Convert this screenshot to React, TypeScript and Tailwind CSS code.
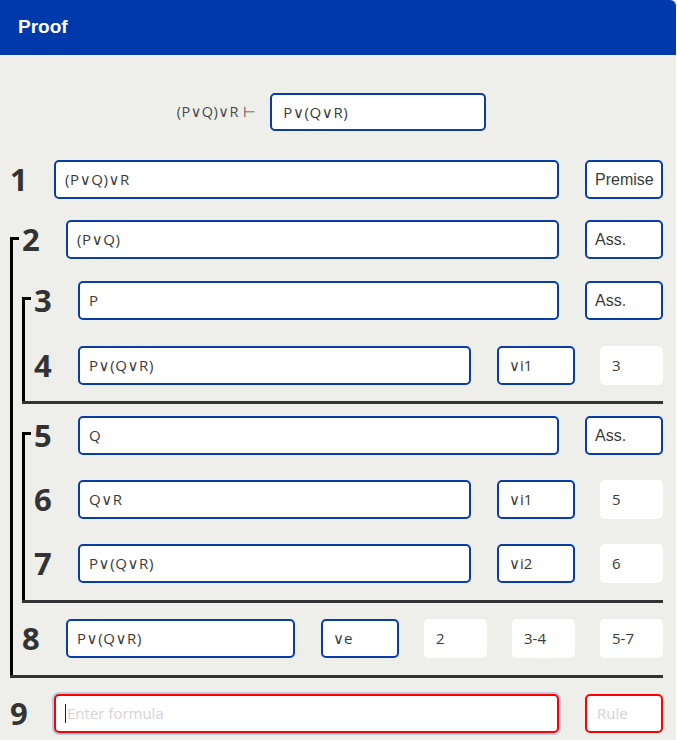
import React from "react";

const FF = { fontFamily: '"Open Sans", "DejaVu Sans", sans-serif' };
const AR = { fontFamily: '"Liberation Sans", Arial, sans-serif' };

type RowProps = {
  n: number;
  formula: string;
  rule: string;
  ruleArial?: boolean;
  refs?: string[];
};

function Row({ n, formula, rule, ruleArial, refs = [] }: RowProps) {
  return (
    <div className="flex items-center h-[39px]">
      <div
        className="w-[44px] shrink-0 text-[31px] font-bold text-[#333] leading-none"
        style={FF}
      >
        {n}
      </div>
      <div
        className="flex-1 min-w-0 h-[39px] border-2 border-[#0a3ca8] rounded-[5px] bg-white pl-[9px] flex items-center text-[15px] text-[#3a3a3a] tracking-[0.6px]"
        style={FF}
      >
        {formula}
      </div>
      <div
        className={`ml-[26px] w-[78px] shrink-0 h-[39px] border-2 border-[#0a3ca8] rounded-[5px] bg-white flex items-center text-[#3a3a3a] ${ruleArial ? "text-[16px] pl-[8px]" : "text-[15px] pl-[10px]"}`}
        style={ruleArial ? AR : FF}
      >
        {rule}
      </div>
      {refs.map((r, i) => (
        <div
          key={i}
          className="ml-[25px] w-[63px] shrink-0 h-[39px] rounded-[5px] bg-white pl-[12px] flex items-center text-[15px] text-[#3a3a3a]"
          style={FF}
        >
          {r}
        </div>
      ))}
    </div>
  );
}

function Sub({
  children,
  className,
  tick,
  pb,
}: {
  children: React.ReactNode;
  className: string;
  tick: string;
  pb: string;
}) {
  return (
    <div className={`relative pl-[12px] border-b-[3px] border-[#333] ${className} ${pb}`}>
      <div className={`absolute left-0 bottom-0 w-[3px] bg-black ${tick}`} />
      <div className={`absolute left-0 w-[9px] h-[3px] bg-black ${tick}`} />
      {children}
    </div>
  );
}

export default function App() {
  return (
    <div className="w-[676px] min-h-[740px] bg-[#eeeeea]">
      <div
        className="h-[55px] bg-[#0039aa] rounded-tr-[6px] flex items-center pl-[18px] text-white text-[19px] font-bold"
        style={AR}
      >
        Proof
      </div>
      <div className="pl-[10px] pr-[13px]">
        <div className="flex items-center justify-center pr-[10px] mt-[38px]">
          <span className="text-[14.5px] text-[#4a4a4a] mr-[14px] tracking-[0.5px]" style={FF}>
            (P∨Q)∨R ⊢
          </span>
          <div
            className="w-[216px] h-[38px] border-2 border-[#0a3ca8] rounded-[5px] bg-white pl-[11px] flex items-center text-[15px] text-[#3a3a3a] tracking-[0.6px]"
            style={FF}
          >
            P∨(Q∨R)
          </div>
        </div>
        <div className="mt-[29px]">
          <Row n={1} formula="(P∨Q)∨R" rule="Premise" ruleArial />
        </div>
        <Sub className="mt-[21px]" tick="top-[17px]" pb="pb-[17px]">
          <Row n={2} formula="(P∨Q)" rule="Ass." ruleArial />
          <Sub className="mt-[22px]" tick="top-[16px]" pb="pb-[16px]">
            <Row n={3} formula="P" rule="Ass." ruleArial />
            <div className="mt-[26px]">
              <Row n={4} formula="P∨(Q∨R)" rule="∨i1" refs={["3"]} />
            </div>
          </Sub>
          <Sub className="mt-[12px]" tick="top-[16px]" pb="pb-[17px]">
            <Row n={5} formula="Q" rule="Ass." ruleArial />
            <div className="mt-[25px]">
              <Row n={6} formula="Q∨R" rule="∨i1" refs={["5"]} />
            </div>
            <div className="mt-[25px]">
              <Row n={7} formula="P∨(Q∨R)" rule="∨i2" refs={["6"]} />
            </div>
          </Sub>
          <div className="mt-[16px]">
            <Row n={8} formula="P∨(Q∨R)" rule="∨e" refs={["2", "3-4", "5-7"]} />
          </div>
        </Sub>
        <div className="mt-[16px] flex items-center h-[39px]">
          <div
            className="w-[44px] shrink-0 text-[31px] font-bold text-[#333] leading-none"
            style={FF}
          >
            9
          </div>
          <div
            className="flex-1 h-[39px] border-2 border-[#ff0000] rounded-[5px] bg-white pl-[9px] flex items-center text-[15px] text-[#d4d4d4] shadow-[0_0_0_2px_#bccbe0]"
            style={FF}
          >
            <span className="inline-block w-px h-[19px] bg-[#222] mr-[1px]" />
            Enter formula
          </div>
          <div
            className="ml-[26px] w-[78px] shrink-0 h-[39px] border-2 border-[#ff0000] rounded-[5px] bg-white pl-[10px] flex items-center text-[15px] text-[#d4d4d4]"
            style={FF}
          >
            Rule
          </div>
        </div>
      </div>
    </div>
  );
}
